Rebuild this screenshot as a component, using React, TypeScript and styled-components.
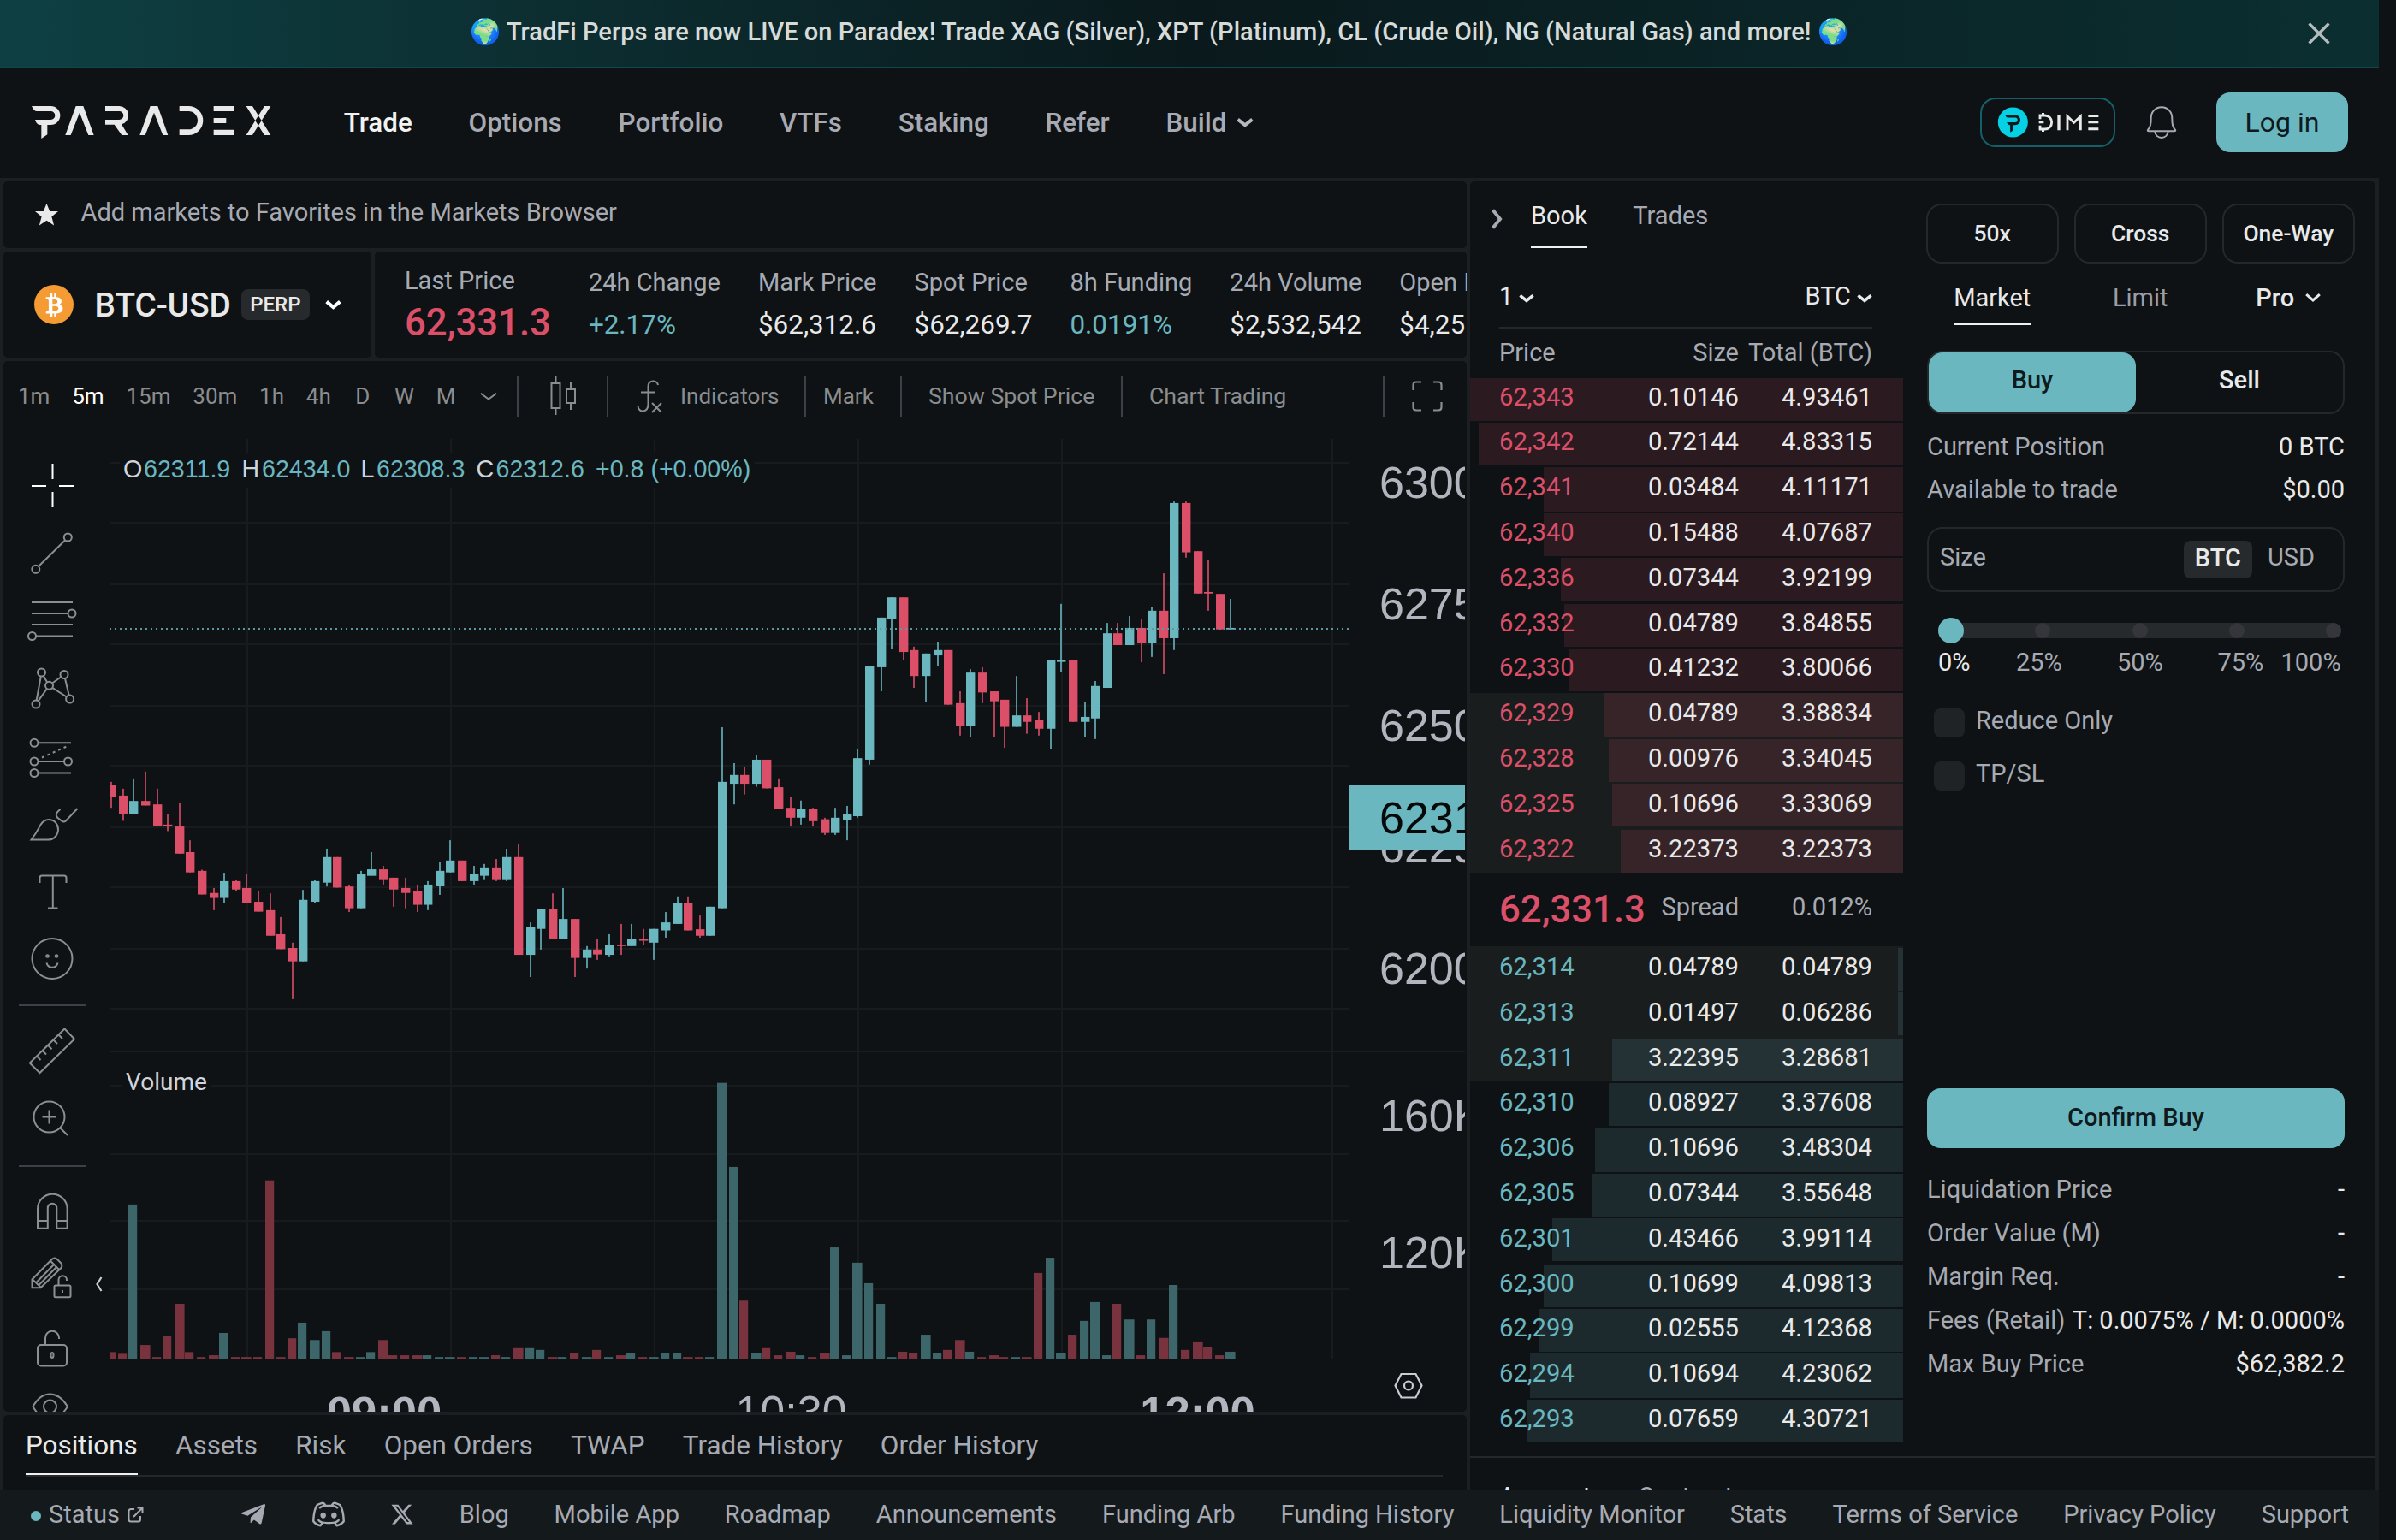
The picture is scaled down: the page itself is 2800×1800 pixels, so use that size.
import React from "react";
import styled, { createGlobalStyle } from "styled-components";
import { FaBtc, FaTelegramPlane } from "react-icons/fa";
import { FaXTwitter } from "react-icons/fa6";
import { RxDiscordLogo } from "react-icons/rx";

const c = {
  bg: "#0e1214",
  gap: "#1b1f22",
  line: "#24282b",
  chip: "#272a2d",
  text: "#e9e9e9",
  muted: "#a7aab2",
  tool: "#8b8c8e",
  teal: "#6ab7c0",
  red: "#db4f68",
};

const GlobalStyle = createGlobalStyle`
  *, *::before, *::after { box-sizing: border-box; }
  body {
    margin: 0;
    background: ${c.bg};
    color: ${c.text};
    font-family: Roboto, "Liberation Sans", sans-serif;
    font-size: 29px;
    white-space: nowrap;
    overflow: hidden;
  }
  svg { display: block; flex: none; }
`;

/* ---------- shell ---------- */

const Page = styled.div`
  width: 2780px;
  height: 1800px;
  display: flex;
  flex-direction: column;
  overflow: hidden;
`;

const Workspace = styled.main`
  flex: 1;
  min-height: 0;
  display: flex;
  gap: 4px;
  padding: 4px 4px 0;
  background: ${c.gap};
`;

const LeftColumn = styled.div`
  width: 1710px;
  display: flex;
  flex-direction: column;
  gap: 4px;
`;

const Panel = styled.section<{ $h?: number; $w?: number }>`
  background: ${c.bg};
  border-radius: 5px;
  overflow: hidden;
  display: flex;
  flex: none;
  ${(p) => (p.$h ? `height: ${p.$h}px;` : "")}
  ${(p) => (p.$w ? `width: ${p.$w}px;` : "")}
`;

/* ---------- banner ---------- */

const Banner = styled.div`
  height: 80px;
  flex: none;
  display: flex;
  align-items: center;
  border-bottom: 2px solid #10474b;
  background: linear-gradient(90deg, #0e4043 0%, #0a191c 50%, #0b2f31 100%);
`;

const BannerText = styled.div`
  flex: 1;
  padding: 0 0 4px 25px;
  text-align: center;
  font-size: 29.05px;
  font-weight: 500;
  color: #d6dbda;
`;

const CloseButton = styled.div`
  width: 96px;
  padding-left: 13px;
`;

/* ---------- header ---------- */

const Header = styled.header`
  height: 128px;
  flex: none;
  display: flex;
  align-items: center;
  padding: 0 36px 2px 35px;
`;

const Nav = styled.nav`
  flex: 1;
  display: flex;
  gap: 65.8px;
  margin-left: 83.5px;
  font-size: 31.4px;
  font-weight: 500;
`;

const NavItem = styled.a<{ $active?: boolean }>`
  display: flex;
  align-items: center;
  gap: 12px;
  color: ${(p) => (p.$active ? "#f2f2f2" : c.muted)};
`;

const DimePill = styled.div`
  width: 158px;
  height: 58px;
  display: flex;
  align-items: center;
  justify-content: center;
  border: 2px solid #146068;
  border-radius: 18px;
`;

const BellWrap = styled.div`
  margin: 0 46px 0 36px;
`;

const LoginButton = styled.button`
  width: 154px;
  height: 70px;
  padding: 0;
  border: 0;
  border-radius: 16px;
  background: ${c.teal};
  color: #0e1a1d;
  font: 400 32px Roboto, sans-serif;
`;

/* ---------- favourites and market ---------- */

const FavText = styled.span`
  color: ${c.muted};
  margin: 0 0 0 26.5px;
  padding-bottom: 7px;
`;

const FavPanel = styled(Panel)`
  align-items: center;
  padding-left: 37px;
`;

const MarketRow = styled.div`
  height: 124px;
  flex: none;
  display: flex;
  gap: 4px;
`;

const PairPanel = styled(Panel)`
  align-items: center;
  padding-left: 36px;
`;

const CoinBadge = styled.div`
  width: 46px;
  height: 46px;
  border-radius: 50%;
  background: #f59b33;
  color: #fff;
  display: flex;
  align-items: center;
  justify-content: center;
`;

const PairName = styled.span`
  margin-left: 24.5px;
  font-size: 38.7px;
  font-weight: 500;
`;

const PerpTag = styled.span`
  width: 80px;
  height: 36px;
  margin: 0 18px 0 12px;
  border-radius: 8px;
  background: ${c.chip};
  font-size: 24px;
  font-weight: 500;
  line-height: 36px;
  text-align: center;
`;

const StatsPanel = styled(Panel)`
  gap: 44px;
  padding: 16px 0 0 35px;
`;

const Stat = styled.div<{ $lead?: boolean }>`
  flex: none;
  display: flex;
  flex-direction: column;
  gap: 9.5px;
  margin-top: ${(p) => (p.$lead ? -2.5 : 0)}px;
`;

const StatLabel = styled.span`
  line-height: 40px;
  color: ${c.muted};
`;

const StatValue = styled.span<{ $color?: string; $big?: boolean }>`
  line-height: 40px;
  color: ${(p) => p.$color || c.text};
  font-size: ${(p) => (p.$big ? 43.7 : 31.4)}px;
  font-weight: ${(p) => (p.$big ? 500 : 400)};
`;

/* ---------- chart ---------- */

const ChartPanel = styled(Panel)`
  flex: 1;
  min-height: 0;
  flex-direction: column;
`;

const Toolbar = styled.div`
  height: 86px;
  flex: none;
  display: flex;
  align-items: center;
  padding: 0 0 4px 17px;
  color: ${c.tool};
  font-size: 26px;
`;

const Periods = styled.div`
  width: 583px;
  display: flex;
  gap: 25.8px;
  align-items: center;
`;

const Period = styled.span<{ $active?: boolean }>`
  min-width: 22.6px;
  text-align: center;
  color: ${(p) => (p.$active ? "#fff" : "inherit")};
`;

const PeriodMenu = styled.span`
  margin-left: 3px;
`;

const ToolSection = styled.div<{ $w: number; $pad: number; $gap?: number; $size?: number }>`
  width: ${(p) => p.$w}px;
  height: 48px;
  display: flex;
  align-items: center;
  gap: ${(p) => p.$gap || 0}px;
  padding-left: ${(p) => p.$pad}px;
  border-left: 2px solid #3d4047;
  font-size: ${(p) => p.$size || 26}px;
`;

const ChartBody = styled.div`
  flex: 1;
  min-height: 0;
  display: flex;
`;

const Rail = styled.div`
  width: 96px;
  padding: 20px 0 0 18px;
  overflow: hidden;
`;

const RailDivider = styled.div<{ $drop?: number }>`
  height: 2px;
  margin: ${(p) => 14 + (p.$drop || 0)}px 0 ${(p) => 14 - (p.$drop || 0)}px;
  background: #3d4049;
`;

const RailHandle = styled.div`
  width: 28px;
  padding: 984px 0 0 12px;
`;

/* ---------- bottom tabs ---------- */

const BottomPanel = styled(Panel)`
  border-radius: 5px 5px 0 0;
  padding: 0 28px 0 26px;
`;

const BottomTabs = styled.div`
  width: 1656px;
  height: 72px;
  display: flex;
  gap: 44.3px;
  border-bottom: 2px solid ${c.line};
`;

const BottomTab = styled.div<{ $active?: boolean }>`
  height: 70px;
  padding-top: 3px;
  line-height: 66px;
  font-size: 31.4px;
  border-bottom: 2px solid ${(p) => (p.$active ? "#f0f0f0" : "transparent")};
  color: ${(p) => (p.$active ? c.text : c.muted)};
`;

/* ---------- right panel ---------- */

const RightPanel = styled(Panel)`
  flex-direction: column;
  border-radius: 5px 5px 0 0;
`;

const RightTop = styled.div`
  height: 1490px;
  flex: none;
  display: flex;
`;

const AccountStrip = styled.div`
  flex: 1;
  min-height: 0;
  overflow: hidden;
  display: flex;
  gap: 55px;
  padding: 28px 0 0 34px;
  border-top: 2px solid ${c.line};
  color: ${c.muted};
`;

const Bright = styled.span`
  color: ${c.text};
`;

const Book = styled.div`
  width: 506px;
  flex: none;
`;

const BookTabs = styled.div`
  height: 78px;
  display: flex;
  align-items: center;
  padding-left: 25px;
`;

const BookTab = styled.div<{ $active?: boolean }>`
  height: 78px;
  line-height: 80px;
  margin-right: 53.5px;
  color: ${(p) => (p.$active ? c.text : c.muted)};
  border-bottom: 2px solid ${(p) => (p.$active ? "#f0f0f0" : "transparent")};
`;

const ChevronSlot = styled.div`
  margin: 9px 33px 0 0;
`;

const UnitRow = styled.div`
  height: 94px;
  margin: 0 36px 0 34px;
  padding-top: 20px;
  display: flex;
  justify-content: space-between;
  align-items: center;
  border-bottom: 2px solid ${c.line};
`;

const Unit = styled.div`
  display: flex;
  align-items: center;
  gap: 7px;
  svg { margin-top: 6px; }
`;

const bookGrid = `
  display: grid;
  grid-template-columns: 120px 160px 156px;
  align-items: center;
  padding-left: 34px;
  & > :not(:first-child) { text-align: right; }
`;

const BookHead = styled.div`
  ${bookGrid}
  height: 58px;
  padding-bottom: 3px;
  color: ${c.muted};
`;

const BookRow = styled.div<{
  $h: number; $side: "ask" | "bid"; $bar: number; $barH: number; $hot?: boolean;
}>`
  ${bookGrid}
  height: ${(p) => p.$h}px;
  padding-bottom: ${(p) => (p.$side === "ask" ? 8 : 4)}px;
  font-size: 29.2px;
  background-color: ${(p) => (p.$hot ? "#191d1d" : "transparent")};
  background-image: ${(p) => {
    const f = p.$side === "ask" ? (p.$hot ? "#362428" : "#2b1a20") : p.$hot ? "#253235" : "#1c2a2d";
    return `linear-gradient(${f}, ${f})`;
  }};
  background-repeat: no-repeat;
  background-size: ${(p) => p.$bar}px ${(p) => p.$barH}px;
  background-position: right ${(p) => (p.$side === "ask" ? 0 : 2)}px;
  & > :first-child { color: ${(p) => (p.$side === "ask" ? c.red : c.teal)}; }
`;

const Asks = styled.div`
  height: 578px;
  overflow: hidden;
`;

const SpreadRow = styled.div`
  ${bookGrid}
  height: 86px;
  padding-bottom: 6px;
  color: ${c.muted};
`;

const SpreadPrice = styled.span`
  color: ${c.red};
  font-size: 43.7px;
  font-weight: 500;
  padding-top: 5px;
`;

const Ticket = styled.div`
  flex: 1;
  display: flex;
  flex-direction: column;
  padding: 26px 36px 83px 28px;
`;

const thirds = `
  display: grid;
  grid-template-columns: repeat(3, 1fr);
  gap: 17.5px;
  margin: 0 -12px 0 -1.5px;
  flex: none;
`;

const ModeRow = styled.div`
  ${thirds}
`;

const ModeButton = styled.div`
  height: 70px;
  border: 2px solid ${c.line};
  border-radius: 18px;
  font-size: 26.4px;
  font-weight: 500;
  line-height: 66px;
  text-align: center;
`;

const TypeRow = styled.div`
  ${thirds}
  height: 68px;
  margin-top: 4px;
  justify-items: center;
`;

const TypeTab = styled.div<{ $state?: "on" | "menu" }>`
  display: flex;
  align-items: center;
  gap: 13px;
  padding-top: 5px;
  font-weight: ${(p) => (p.$state === "menu" ? 500 : 400)};
  color: ${(p) => (p.$state ? c.text : "#9a9da6")};
  border-bottom: 2px solid ${(p) => (p.$state === "on" ? "#f0f0f0" : "transparent")};
`;

const SideSwitch = styled.div`
  height: 74px;
  margin-top: 30px;
  flex: none;
  display: flex;
  border: 2px solid ${c.line};
  border-radius: 18px;
`;

const Side = styled.div<{ $on?: boolean }>`
  flex: 1;
  border-radius: 16px;
  background: ${(p) => (p.$on ? c.teal : "transparent")};
  color: ${(p) => (p.$on ? "#0e1a1d" : c.text)};
  font-weight: 500;
  line-height: 65px;
  text-align: center;
`;

const InfoList = styled.div<{ $mt: number; $row: number }>`
  margin-top: ${(p) => p.$mt}px;
  flex: none;
  display: grid;
  grid-auto-rows: ${(p) => p.$row}px;
`;

const InfoRow = styled.div`
  display: flex;
  align-items: center;
  justify-content: space-between;
  color: ${c.muted};
`;

const SizeBox = styled.div`
  height: 76px;
  margin-top: 19px;
  flex: none;
  display: flex;
  align-items: center;
  padding: 0 33px 6px 13px;
  border: 2px solid ${c.line};
  border-radius: 18px;
  color: ${c.muted};
`;

const UnitChip = styled.span`
  width: 80px;
  height: 44px;
  margin: 6px 18px 0 auto;
  border-radius: 8px;
  background: ${c.chip};
  color: ${c.text};
  font-weight: 500;
  line-height: 40px;
  text-align: center;
`;

const Track = styled.div`
  position: relative;
  height: 18px;
  margin: 36px 4px 0 13px;
  flex: none;
  display: flex;
  justify-content: space-between;
  border-radius: 9px;
  background: #272a2c;
`;

const Stop = styled.i`
  width: 18px;
  border-radius: 50%;
  background: #34363b;
`;

const Thumb = styled.i`
  position: absolute;
  left: 0;
  top: -6px;
  width: 30px;
  height: 30px;
  border-radius: 50%;
  background: ${c.teal};
`;

const TrackLabels = styled.div`
  display: grid;
  grid-template-columns: 91px 118px 117.5px 74px auto;
  margin: 10px 0 0 13px;
  flex: none;
  line-height: 37px;
  height: 36px;
  color: ${c.muted};
`;

const CheckRow = styled.label<{ $mt: number }>`
  display: flex;
  align-items: center;
  height: 36px;
  margin: ${(p) => p.$mt}px 0 0 8px;
  flex: none;
  color: ${c.muted};
  line-height: 30px;
`;

const CheckBox = styled.i`
  width: 36px;
  height: 34px;
  margin-right: 13px;
  border-radius: 8px;
  background: #1f2326;
`;

const CheckText = styled.span`
  padding-bottom: 7px;
`;

const ConfirmButton = styled.div`
  height: 70px;
  margin-top: auto;
  flex: none;
  border-radius: 16px;
  background: ${c.teal};
  color: #0e1a1d;
  font-weight: 500;
  line-height: 69px;
  text-align: center;
`;

/* ---------- footer ---------- */

const Footer = styled.footer`
  height: 58px;
  flex: none;
  display: flex;
  align-items: center;
  justify-content: space-between;
  padding: 0 35px 2px 36px;
  background: #14191c;
  color: ${c.muted};
`;

const StatusLink = styled.div`
  display: flex;
  align-items: center;
  gap: 9px;
`;

const StatusDot = styled.i`
  width: 12px;
  height: 12px;
  margin-top: 3px;
  border-radius: 50%;
  background: ${c.teal};
`;

const FooterLinks = styled.div`
  display: flex;
  align-items: center;
  gap: 52.9px;
`;

/* ---------- icons ---------- */

const Chevron = ({ w = 18, h = 10, s = 3.6, color = c.text }: { w?: number; h?: number; s?: number; color?: string }) => (
  <svg width={w} height={h} viewBox={`0 0 ${w} ${h}`} fill="none" stroke={color} strokeWidth={s}>
    <path d={`M${s * 0.4} ${s * 0.4}L${w / 2} ${h - s * 0.7}L${w - s * 0.4} ${s * 0.4}`} />
  </svg>
);

const markP = "M50 72H117a33 33 0 0 1 0 66H105V172L84 186V138H78Q68 138 62 120H117a15 15 0 0 0 0-30H68Q58 90 50 72Z";

const Logo = () => (
  <svg width={283.3} height={42} viewBox="44 66 850 126" fill="#e9e9e9">
    <path d={markP} />
    <path d="M168 174L205 72H231L268 174H249L218 95L187 174Z" />
    <path d="M308 72H357a32.5 32.5 0 0 1 8 64L388 174H366L340 137H308V120H357a15 15 0 0 0 0-30H308Z" />
    <path d="M429 174L466 72H492L528 174H510L479 95L448 174Z" />
    <path d="M568 72H600a51 51 0 0 1 0 102H568V154H600a32 32 0 0 0 0-64H568Z" />
    <path d="M688 72h71v18h-71zM688 114h44v18h-44zM688 155h71v19h-71z" />
    <path d="M802 72H824L888 174H866ZM888 72H866L802 174H824Z" />
  </svg>
);

const DimeLogo = () => (
  <svg width={120} height={40} viewBox="98 69 360 120" fill="#e9e9e9">
    <circle cx="156" cy="129" r="52.500" fill="#06d1e4" />
    <path d={markP} fill="#0e1a1d" transform="translate(101 64) scale(.54)" />
    <path d="M247 105H268a24 24 0 0 1 0 48H247M251 105V118M251 140V153" fill="none" stroke="#e9e9e9" strokeWidth="8.500" />
    <path d="M247 124h17v9h-17zM257 96h9v10h-9zM257 152h9v10h-9z" />
    <path d="M312 102h10v55h-10zM420 102h36v9h-36zM420 125h36v8h-36zM420 148h36v9h-36z" />
    <path d="M347 157V108L370 130L393 108V157" fill="none" stroke="#e9e9e9" strokeWidth="8.500" />
  </svg>
);

const Bell = () => (
  <svg width={36} height={40} viewBox="625 68 108 120" fill="none" stroke={c.muted} strokeWidth="6">
    <path d="M679 74.500c-23 0-37 18-37 40 0 22-2 29-11 40q-2 4 3 4h90q5 0 3-4c-9-11-11-18-11-40 0-22-14-40-37-40z" />
    <path d="M656 160c2 29 44 29 46 0" />
  </svg>
);

const Star = () => (
  <svg width={27} height={26} viewBox="0 0 27 26" fill="#e9e9e9">
    <path d="M13.500 0l3.700 9h9.800l-7.600 6.300 2.700 10.200-8.600-5.700-8.600 5.700 2.700-10.200L0 9h9.800z" />
  </svg>
);

const railIcons: Record<string, { y: number; h: number; el: React.ReactNode; color?: string }> = {
  cross: { y: 528, h: 79, color: "#fff", el: <path d="M61.500 542v18M61.500 575v18M37 568h17M69 568h18" /> },
  trend: { y: 607, h: 79, el: <><circle cx="41.800" cy="665.300" r="4.500" /><circle cx="79.300" cy="628" r="4.500" /><path d="M45 662L76 631.500" /></> },
  fib: { y: 686, h: 79, el: <><path d="M37 704h48M37 717h42.500M37 730h48M42 743.500h43" /><circle cx="84" cy="717" r="4.500" /><circle cx="37.500" cy="743.500" r="4.500" /></> },
  pattern: { y: 765, h: 79, el: <><circle cx="48.500" cy="786" r="4.500" /><circle cx="75" cy="788.500" r="4.500" /><circle cx="57.500" cy="801.300" r="4.500" /><circle cx="42" cy="823" r="4.500" /><circle cx="81.600" cy="817" r="4.500" /><path d="M42.700 818.500L47.800 790.500M50.800 790L55.200 797.400M61.100 798.500L71.300 791.200M76 793L80.600 812.600M44.600 819.300L54.900 805M61.200 803.800L77.800 814.500" /></> },
  forecast: { y: 844, h: 79, el: <><circle cx="40" cy="868.300" r="4.500" /><circle cx="40" cy="890" r="4.500" /><circle cx="79.500" cy="890" r="4.500" /><circle cx="40" cy="903.500" r="4.500" /><path d="M44.500 868.300H83M44.500 890H75M44.500 903.500H83" /><path d="M49 885.500L80 871.500" strokeDasharray="3 4" /></> },
  brush: { y: 923, h: 79, el: <><path d="M36.500 981.500C44 972 45 968 47.500 964C50 960 53 958 57 958C63.500 958 68 963 68 969.500C68 976 63 981.500 56 981.500Z" /><path d="M70.500 946C65.500 950 64.500 952 67 955.500L72 959.500Q74.500 961.500 77 959.500L90.500 945" /></> },
  text: { y: 1002, h: 79, el: <path d="M46.500 1032V1026Q46.500 1023.500 49 1023.500H75Q77.500 1023.500 77.500 1026V1032M61.800 1023.500V1061.500M56 1061.500H67.500" /> },
  smile: { y: 1081, h: 79, el: <><circle cx="61" cy="1120.500" r="23.500" /><circle cx="55.500" cy="1117.500" r="1.300" /><circle cx="66" cy="1117.500" r="1.300" /><path d="M54.500 1125.500C56 1132.500 66 1132.500 67.500 1125.500" /></> },
  ruler: { y: 1190, h: 78, el: <path d="M75.500 1202.500L87 1214.500L46.500 1254L34.800 1242.500ZM68.500 1209.500l4.500 4.500M62.500 1215.500l4.500 4.500M56 1221.700l4.500 4.500M49.500 1228l4.500 4.500M43 1234.500l4.500 4.500" /> },
  zoom: { y: 1268, h: 78, el: <><circle cx="57.500" cy="1305.500" r="18" /><path d="M57.500 1297.500v16M49.500 1305.500h16M70 1318l9 9" /></> },
  magnet: { y: 1376, h: 79, el: <path d="M44 1435.800V1413A17.300 17.300 0 0 1 78.600 1413V1435.800H66.300V1412A5.200 5.200 0 0 0 55.800 1412V1435.800ZM44 1427h12M66.500 1427h12" /> },
  pencil: { y: 1455, h: 79, el: <><path d="M37.500 1505.200V1495.500L60.500 1472Q64 1469 67 1472L71.500 1476.500Q73.500 1480 71 1482.500L47.500 1505.200ZM59 1473.800L69 1484M38 1495.500L48 1505M63 1478L43 1498.500M66 1481L46 1501.500" /><rect x="63.500" y="1502.500" width="19" height="13.800" rx="1.500" /><path d="M68.500 1502V1496A4.700 4.700 0 0 1 78 1496V1497M73 1508v3" /></> },
  lock: { y: 1534, h: 79, el: <><rect x="44" y="1572" width="34" height="24.500" rx="4" /><path d="M53 1572V1564A8 8 0 0 1 69 1563.500V1565" /><ellipse cx="61" cy="1584" rx="1.500" ry="3" /></> },
  eye: { y: 1613, h: 62, el: <><path d="M38.500 1644C44 1634 51 1629.500 58.500 1629.500C66 1629.500 73 1634 79 1644C73 1654 66 1658.500 58.500 1658.500C51 1658.500 44 1654 38.500 1644Z" /><circle cx="58.500" cy="1644" r="7.500" /></> },
};

const RailIcon = ({ name }: { name: string }) => {
  const i = railIcons[name];
  return (
    <svg width={78} height={i.h} viewBox={`22 ${i.y} 78 ${i.h}`} fill="none" stroke={i.color || "#8d8e90"} strokeWidth="2">
      {i.el}
    </svg>
  );
};

/* ---------- chart data: colour, high, body top, body bottom, low, volume top ---------- */

const candles = `r 927 936 967 995 1038|r 945 963 1011 1029 1043|g 918 977 1011 1011 622|r 900 977 989 989 1018|r 945 986 1043 1043 1052|r 1012 1039 1043 1056 993|r 981 1044 1115 1115 902|r 1080 1111 1164 1164 1038|r 1157 1160 1222 1222 1052|r 1205 1218 1231 1263 1047|g 1165 1187 1231 1245 984|r 1183 1187 1209 1214 1052|r 1169 1205 1245 1245 1052|r 1214 1241 1267 1267 1052|r 1219 1263 1330 1330 554|r 1281 1326 1365 1365 1052|r 1348 1362 1397 1496 999|g 1210 1236 1397 1397 955|g 1183 1187 1241 1245 1004|g 1102 1124 1191 1201 979|r 1124 1124 1204 1204 1038|r 1196 1201 1258 1268 1052|g 1160 1169 1258 1258 1052|g 1111 1156 1173 1173 1038|r 1147 1156 1182 1196 1004|r 1178 1178 1209 1254 1047|r 1178 1205 1218 1258 1047|r 1196 1214 1249 1268 1047|g 1187 1196 1249 1263 1047|g 1138 1160 1200 1223 1052|g 1080 1133 1164 1164 1052|r 1133 1133 1187 1187 1052|g 1147 1169 1187 1196 1052|g 1142 1151 1173 1182 1052|r 1129 1151 1182 1187 1047|g 1102 1124 1182 1187 1052|r 1089 1124 1380 1380 1027|g 1295 1308 1380 1438 1027|g 1259 1259 1312 1366 1032|r 1219 1259 1339 1339 1052|g 1205 1286 1339 1339 1052|r 1286 1286 1388 1438 1042|g 1357 1366 1388 1416 1052|r 1339 1366 1379 1393 1032|g 1326 1353 1380 1384 1052|r 1299 1353 1357 1380 1047|g 1299 1339 1357 1357 1042|r 1312 1339 1343 1353 1052|g 1312 1312 1348 1393 1052|g 1268 1295 1316 1335 1042|g 1227 1245 1299 1299 1042|r 1227 1245 1316 1316 1052|r 1277 1313 1330 1335 1052|g 1254 1254 1330 1330 1052|g 784 927 1258 1258 279|g 878 909 932 986 516|r 887 909 932 960 893|g 856 869 932 940 1042|r 869 869 944 944 1027|r 918 941 998 998 1047|r 967 995 1021 1044 1037|g 976 999 1021 1039 1047|r 995 999 1030 1044 1052|r 1021 1025 1061 1066 1042|g 995 1021 1061 1066 743|g 990 1012 1026 1080 1047|g 842 865 1017 1021 786|g 623 623 869 882 844|g 497 497 627 690 902|g 444 444 501 578 1052|r 444 444 587 609 1037|r 573 582 650 681 1042|g 591 591 650 717 989|g 560 582 596 623 1042|r 582 582 725 725 1032|r 690 721 780 806 1004|g 632 641 780 810 1037|r 627 641 693 721 1052|r 690 690 716 810 1047|r 712 712 783 838 1052|g 650 753 783 783 1052|r 708 753 770 801 1052|r 744 766 788 806 815|g 609 609 788 842 772|g 461 608 613 640 1042|r 609 609 770 770 989|g 717 757 770 810 950|g 663 676 761 815 897|g 511 538 681 681 1047|r 511 538 569 569 902|g 493 524 569 569 946|r 502 524 563 614 1047|g 470 479 563 600 946|r 381 479 551 645 998|g 193 197 551 582 849|r 193 197 326 340 1032|r 323 323 434 434 1008|r 345 430 434 479 1023|r 435 435 528 528 1047|g 448 524 528 528 1037`
  .split("|")
  .map((row, i) => {
    const [k, ...v] = row.split(" ");
    const n = v.map(Number);
    const price = (y: number) => 500 + y / 2.24;
    return {
      x: 2 * Math.round((288.8 + 13.22 * (i - 12)) / 2),
      up: k === "g",
      high: price(n[0]), top: price(n[1]), bottom: price(n[2]), low: price(n[3]),
      vol: 1150 + n[4] / 2.412,
    };
  });

const axis = { fontFamily: '"Liberation Sans", Arial, sans-serif', fontSize: 52 };

const legend: [string, string, number, number][] = [
  ["O", "62311.9", 144, 168],
  ["H", "62434.0", 282.5, 306],
  ["L", "62308.3", 421.5, 440],
  ["C", "62312.6", 556.5, 579.5],
];

const Chart = () => (
  <svg width={1584} height={1142} viewBox="128 508 1584 1142">
    <g stroke="#171b1e" strokeWidth="2">
      {[541, 611, 683, 753, 825, 895, 967, 1037, 1109, 1179, 1269, 1349, 1427, 1507].map((y) => (
        <path key={y} d={`M128 ${y}H1576`} />
      ))}
      {[289, 527, 765, 1003, 1241, 1557].map((x) => (
        <path key={x} d={`M${x} 513V1588`} />
      ))}
      <path d="M128 1229H1712" stroke="#191d20" />
    </g>
    {candles.map((k, i) => (
      <g key={i} fill={k.up ? c.teal : c.red}>
        <rect x={k.x - 6} y={k.vol} width={i % 3 ? 10.2 : 11.6} height={1588 - k.vol} fill={k.up ? "#3d666b" : "#79333f"} />
        <rect x={k.x - 1} y={k.high} width="2" height={k.low - k.high} opacity=".8" />
        <rect x={k.x - 5} y={k.top} width="10.400" height={k.bottom - k.top} />
      </g>
    ))}
    <path d="M128 735H1576" stroke="#5a99a1" strokeWidth="2" strokeDasharray="2 4" />
    <g fill={c.teal} fontFamily={axis.fontFamily} fontSize="28.600">
      <rect x="140" y="530" width="742" height="40" fill={c.bg} />
      {legend.map(([k, v, x, vx]) => (
        <React.Fragment key={k}>
          <text x={x} y="558" fill="#d1d4dc">{k}</text>
          <text x={vx} y="558">{v}</text>
        </React.Fragment>
      ))}
      <text x="696" y="558">+0.8 (+0.00%)</text>
    </g>
    <rect x="142" y="1250" width="104" height="36" fill={c.bg} />
    <text x="147" y="1274" fill="#d1d4dc" fontSize="28" fontFamily="Roboto, sans-serif">Volume</text>
    <g fill="#b2b5be" {...axis}>
      <text x="1612" y="581.500">63000</text>
      <text x="1612" y="723.500">62750</text>
      <text x="1612" y="865.500">62500</text>
      <text x="1612" y="1007.500">62250</text>
      <text x="1612" y="1149.500">62000</text>
      <text x="1612" y="1322">160K</text>
      <text x="1612" y="1482">120K</text>
      <text x="449" y="1669" textAnchor="middle" fontWeight="700" fontSize="52.600">09:00</text>
      <text x="924.500" y="1668" textAnchor="middle">10:30</text>
      <text x="1399.500" y="1669" textAnchor="middle" fontWeight="700" fontSize="52.600">12:00</text>
      <rect x="1576" y="918" width="136" height="76" fill={c.teal} />
      <text x="1612" y="974" fill="#06090a">62312</text>
    </g>
    <g fill="none" stroke="#c9ccd2" strokeWidth="2.200">
      <path d="M1637.500 1606H1654.500L1661.500 1619.500L1654.500 1633.500H1637.500L1630.500 1619.500Z" />
      <circle cx="1646" cy="1619.500" r="5" />
    </g>
  </svg>
);

/* ---------- order book ---------- */

const even = (n: number) => 2 * Math.floor(n / 2);

const asks: [string, string, string, number][] = [
  ["62,343", "0.10146", "4.93461", 506], ["62,342", "0.72144", "4.83315", 496],
  ["62,341", "0.03484", "4.11171", 420], ["62,340", "0.15488", "4.07687", 420],
  ["62,336", "0.07344", "3.92199", 400], ["62,332", "0.04789", "3.84855", 396],
  ["62,330", "0.41232", "3.80066", 390], ["62,329", "0.04789", "3.38834", 350],
  ["62,328", "0.00976", "3.34045", 344], ["62,325", "0.10696", "3.33069", 340],
  ["62,322", "3.22373", "3.22373", 330],
];

const bids: [string, string, string, number][] = [
  ["62,314", "0.04789", "0.04789", 6], ["62,313", "0.01497", "0.06286", 6],
  ["62,311", "3.22395", "3.28681", 340], ["62,310", "0.08927", "3.37608", 344],
  ["62,306", "0.10696", "3.48304", 360], ["62,305", "0.07344", "3.55648", 364],
  ["62,301", "0.43466", "3.99114", 410], ["62,300", "0.10699", "4.09813", 420],
  ["62,299", "0.02555", "4.12368", 426], ["62,294", "0.10694", "4.23062", 436],
  ["62,293", "0.07659", "4.30721", 440],
];

const BookRows = ({ side, rows, start }: { side: "ask" | "bid"; rows: typeof asks; start: number }) => (
  <>
    {rows.map(([price, size, total, bar], i) => {
      const y = even(start + 52.8 * i);
      return (
        <BookRow
          key={price}
          $side={side}
          $h={even(start + 52.8 * (i + 1)) - y}
          $bar={bar}
          $barH={even(start + 52.8 * i + 50.7) - y}
          $hot={side === "ask" ? i >= 7 : i < 3}
        >
          <span>{price}</span>
          <span>{size}</span>
          <span>{total}</span>
        </BookRow>
      );
    })}
  </>
);

const stats: [string, string, string?][] = [
  ["24h Change", "+2.17%", c.teal],
  ["Mark Price", "$62,312.6"],
  ["Spot Price", "$62,269.7"],
  ["8h Funding", "0.0191%", c.teal],
  ["24h Volume", "$2,532,542"],
  ["Open Interest", "$4,251,904"],
];

export default function App() {
  return (
    <>
      <GlobalStyle />
      <Page>
        <Banner>
          <BannerText>
            🌍 TradFi Perps are now LIVE on Paradex! Trade XAG (Silver), XPT (Platinum), CL (Crude Oil), NG (Natural Gas) and more! 🌍
          </BannerText>
          <CloseButton>
            <svg width={26} height={26} viewBox="0 0 26 26" stroke="#b5bcbd" strokeWidth="3.200">
              <path d="M1.500 1.500L24.500 24.500M24.500 1.500L1.500 24.500" />
            </svg>
          </CloseButton>
        </Banner>
        <Header>
          <Logo />
          <Nav>
            <NavItem $active>Trade</NavItem>
            {["Options", "Portfolio", "VTFs", "Staking", "Refer"].map((t) => (
              <NavItem key={t}>{t}</NavItem>
            ))}
            <NavItem>Build <Chevron w={20} h={11} s={4} color="#b5b8bf" /></NavItem>
          </Nav>
          <DimePill><DimeLogo /></DimePill>
          <BellWrap><Bell /></BellWrap>
          <LoginButton>Log in</LoginButton>
        </Header>
        <Workspace>
          <LeftColumn>
            <FavPanel $h={78}>
              <Star />
              <FavText>Add markets to Favorites in the Markets Browser</FavText>
            </FavPanel>
            <MarketRow>
              <PairPanel $w={430}>
                <CoinBadge><FaBtc size={27} /></CoinBadge>
                <PairName>BTC-USD</PairName>
                <PerpTag>PERP</PerpTag>
                <Chevron w={19} h={11} s={4.2} color="#fff" />
              </PairPanel>
              <StatsPanel $w={1276}>
                <Stat $lead>
                  <StatLabel>Last Price</StatLabel>
                  <StatValue $big $color={c.red}>62,331.3</StatValue>
                </Stat>
                {stats.map(([label, value, color]) => (
                  <Stat key={label}>
                    <StatLabel>{label}</StatLabel>
                    <StatValue $color={color}>{value}</StatValue>
                  </Stat>
                ))}
              </StatsPanel>
            </MarketRow>
            <ChartPanel>
              <Toolbar>
                <Periods>
                  {["1m", "5m", "15m", "30m", "1h", "4h", "D", "W", "M"].map((p) => (
                    <Period key={p} $active={p === "5m"}>{p}</Period>
                  ))}
                  <PeriodMenu><Chevron w={20} h={9} s={2} color={c.tool} /></PeriodMenu>
                </Periods>
                <ToolSection $w={105} $pad={37}>
                  <svg width={31} height={46} viewBox="0 0 31 46" fill="none" stroke={c.tool} strokeWidth="2">
                    <path d="M6.500 0V7M6.500 38V45M24 7V14M24 32V39M1.500 8H11.500V37H1.500ZM19 15H29V31H19Z" />
                  </svg>
                </ToolSection>
                <ToolSection $w={231} $pad={33} $gap={21}>
                  <svg width={30} height={39} viewBox="0 0 30 39" fill="none" stroke={c.tool} strokeWidth="2">
                    <path d="M25 6C24 0 13.500 -.5 13.500 8V28C13.500 38.500 2.500 39 1.500 31M5 14.500H22M18 27L29 38M29 27L18 38" />
                  </svg>
                  Indicators
                </ToolSection>
                <ToolSection $w={112} $pad={20}>Mark</ToolSection>
                <ToolSection $w={258} $pad={31} $size={26.7}>Show Spot Price</ToolSection>
                <ToolSection $w={306} $pad={31} $size={26.7}>Chart Trading</ToolSection>
                <ToolSection $w={90} $pad={32}>
                  <svg width={36} height={36} viewBox="0 0 36 36" fill="none" stroke={c.tool} strokeWidth="2.200">
                    <path d="M1.500 11V5Q1.500 1.500 5 1.500H11M25 1.500H31Q34.500 1.500 34.500 5V11M34.500 25V31Q34.500 34.500 31 34.500H25M11 34.500H5Q1.500 34.500 1.500 31V25" />
                  </svg>
                </ToolSection>
              </Toolbar>
              <ChartBody>
                <Rail>
                  {["cross", "trend", "fib", "pattern", "forecast", "brush", "text", "smile"].map((n) => (
                    <RailIcon key={n} name={n} />
                  ))}
                  <RailDivider />
                  <RailIcon name="ruler" />
                  <RailIcon name="zoom" />
                  <RailDivider $drop={2} />
                  {["magnet", "pencil", "lock", "eye"].map((n) => (
                    <RailIcon key={n} name={n} />
                  ))}
                </Rail>
                <RailHandle>
                  <svg width={8} height={18} viewBox="0 0 8 18" fill="none" stroke="#c9ccd2" strokeWidth="2.200">
                    <path d="M6.500 1L1.500 9L6.500 17" />
                  </svg>
                </RailHandle>
                <Chart />
              </ChartBody>
            </ChartPanel>
            <BottomPanel $h={88}>
              <BottomTabs>
                {["Positions", "Assets", "Risk", "Open Orders", "TWAP", "Trade History", "Order History"].map((t) => (
                  <BottomTab key={t} $active={t === "Positions"}>{t}</BottomTab>
                ))}
              </BottomTabs>
            </BottomPanel>
          </LeftColumn>
          <RightPanel $w={1058}>
            <RightTop>
              <Book>
                <BookTabs>
                  <ChevronSlot>
                    <svg width={13} height={24} viewBox="0 0 13 24" fill="none" stroke={c.muted} strokeWidth="4">
                      <path d="M1.500 1.500L10 12L1.500 22.500" />
                    </svg>
                  </ChevronSlot>
                  <BookTab $active>Book</BookTab>
                  <BookTab>Trades</BookTab>
                </BookTabs>
                <UnitRow>
                  <Unit>1 <Chevron /></Unit>
                  <Unit>BTC <Chevron /></Unit>
                </UnitRow>
                <BookHead>
                  <span>Price</span>
                  <span>Size</span>
                  <span>Total (BTC)</span>
                </BookHead>
                <Asks><BookRows side="ask" rows={asks} start={442} /></Asks>
                <SpreadRow>
                  <SpreadPrice>62,331.3</SpreadPrice>
                  <span>Spread</span>
                  <span>0.012%</span>
                </SpreadRow>
                <BookRows side="bid" rows={bids} start={1108.4} />
              </Book>
              <Ticket>
                <ModeRow>
                  <ModeButton>50x</ModeButton>
                  <ModeButton>Cross</ModeButton>
                  <ModeButton>One-Way</ModeButton>
                </ModeRow>
                <TypeRow>
                  <TypeTab $state="on">Market</TypeTab>
                  <TypeTab>Limit</TypeTab>
                  <TypeTab $state="menu">Pro <Chevron w={18} h={10} s={3} /></TypeTab>
                </TypeRow>
                <SideSwitch>
                  <Side $on>Buy</Side>
                  <Side>Sell</Side>
                </SideSwitch>
                <InfoList $mt={13} $row={50}>
                  <InfoRow>Current Position <Bright>0 BTC</Bright></InfoRow>
                  <InfoRow>Available to trade <Bright>$0.00</Bright></InfoRow>
                </InfoList>
                <SizeBox>
                  Size
                  <UnitChip>BTC</UnitChip>
                  USD
                </SizeBox>
                <Track>
                  <Stop /><Stop /><Stop /><Stop /><Stop />
                  <Thumb />
                </Track>
                <TrackLabels>
                  <Bright>0%</Bright>
                  <span>25%</span>
                  <span>50%</span>
                  <span>75%</span>
                  <span>100%</span>
                </TrackLabels>
                <CheckRow $mt={35}><CheckBox /><CheckText>Reduce Only</CheckText></CheckRow>
                <CheckRow $mt={26}><CheckBox /><CheckText>TP/SL</CheckText></CheckRow>
                <ConfirmButton>Confirm Buy</ConfirmButton>
                <InfoList $mt={22} $row={51}>
                  <InfoRow>Liquidation Price <Bright>-</Bright></InfoRow>
                  <InfoRow>Order Value (M) <Bright>-</Bright></InfoRow>
                  <InfoRow>Margin Req. <Bright>-</Bright></InfoRow>
                  <InfoRow>Fees (Retail) <Bright>T: 0.0075% / M: 0.0000%</Bright></InfoRow>
                  <InfoRow>Max Buy Price <Bright>$62,382.2</Bright></InfoRow>
                </InfoList>
              </Ticket>
            </RightTop>
            <AccountStrip><Bright>Account</Bright><span>Contract</span></AccountStrip>
          </RightPanel>
        </Workspace>
        <Footer>
          <StatusLink>
            <StatusDot />
            Status
            <svg width={19} height={19} viewBox="0 0 19 19" fill="none" stroke={c.muted} strokeWidth="2">
              <path d="M8 3H4Q1.500 3 1.500 5.500V15Q1.500 17.500 4 17.500H12.500Q15 17.500 15 15V11M7 12L17 2M11.500 1.500H17.500V7.500" />
            </svg>
          </StatusLink>
          <FooterLinks>
            <FaTelegramPlane size={32} />
            <RxDiscordLogo size={38} />
            <FaXTwitter size={28} />
            {["Blog", "Mobile App", "Roadmap", "Announcements", "Funding Arb", "Funding History", "Liquidity Monitor", "Stats", "Terms of Service", "Privacy Policy", "Support"].map((t) => (
              <span key={t}>{t}</span>
            ))}
          </FooterLinks>
        </Footer>
      </Page>
    </>
  );
}
